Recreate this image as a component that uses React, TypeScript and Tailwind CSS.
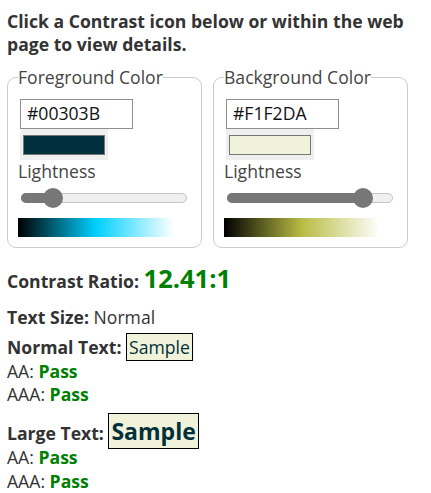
import React from 'react';

interface ColorPanelProps {
  legend: string;
  hex: string;
  thumbLeft: number;
  gradient: string;
}

const ColorPanel: React.FC<ColorPanelProps> = ({ legend, hex, thumbLeft, gradient }) => (
  <fieldset className="w-[195px] rounded-[9px] border border-[#cccccc] px-[10px] pt-[10px] pb-[10px]">
    <legend className="text-[17.6px] leading-[23.4px] text-[#444]">{legend}</legend>
    <div className="ml-[2px] flex h-[29.5px] w-[113px] items-center border border-[#8f8f8f] bg-white pl-[6px] text-[17.6px] text-[#111]">
      {hex}
    </div>
    <div className="ml-[2px] h-[31px] w-[88px] bg-[#efefef] px-[3px] pt-[6px]">
      <div className="h-[20px] w-[82px] border border-[#777]" style={{ backgroundColor: hex }} />
    </div>
    <div className="text-[17.6px] leading-[23.4px] text-[#444]">Lightness</div>
    <div className="relative ml-[3px] mt-[5px] flex h-[20px] w-[166px] items-center">
      <div className="h-[9.5px] w-full rounded-full border border-[#c4c4c4] bg-[#efefef]" />
      <div
        className="absolute left-0 top-[5.25px] h-[9.5px] rounded-l-full bg-[#777]"
        style={{ width: thumbLeft + 10 }}
      />
      <div
        className="absolute top-0 h-[20px] w-[20px] rounded-full bg-[#777]"
        style={{ left: thumbLeft }}
      />
    </div>
    <div className="mt-[10px] h-[19px] w-[156px]" style={{ background: gradient }} />
  </fieldset>
);

const Pass: React.FC<{ label: string }> = ({ label }) => (
  <div>
    {label}: <b className="font-bold text-[#008000]">Pass</b>
  </div>
);

export default function App() {
  return (
    <div
      className="min-h-[493px] bg-white px-[7px] pt-[10px] text-[17.6px] leading-[23.4px] text-[#333]"
      style={{ fontFamily: '"Open Sans", "Noto Sans", sans-serif' }}
    >
      <h2 className="font-bold">Click a Contrast icon below or within the web page to view details.</h2>

      <div className="mt-[9px] flex gap-[11px]">
        <ColorPanel
          legend="Foreground Color"
          hex="#00303B"
          thumbLeft={21.6}
          gradient="linear-gradient(to right, #000000, hsl(191, 100%, 50%), #ffffff)"
        />
        <ColorPanel
          legend="Background Color"
          hex="#F1F2DA"
          thumbLeft={126}
          gradient="linear-gradient(to right, #000000, hsl(62, 48%, 50%), #ffffff)"
        />
      </div>

      <div className="mt-[14px] leading-[1.33]">
        <b className="font-bold">Contrast Ratio:</b>{' '}
        <span className="text-[25.5px] font-bold text-[#008000]">12.41:1</span>
      </div>

      <div className="mt-[10px]">
        <b className="font-bold">Text Size:</b> Normal
      </div>

      <div className="mt-[7px]">
        <div>
          <b className="font-bold">Normal Text:</b>{' '}
          <span className="border border-black bg-[#F1F2DA] px-[2px] py-px text-[#00303B]">Sample</span>
        </div>
        <Pass label="AA" />
        <Pass label="AAA" />
      </div>

      <div className="mt-[9px]">
        <div className="leading-[1.33]">
          <b className="font-bold">Large Text:</b>{' '}
          <span className="border border-black bg-[#F1F2DA] px-[2px] py-px text-[23px] font-bold text-[#00303B]">
            Sample
          </span>
        </div>
        <Pass label="AA" />
        <Pass label="AAA" />
      </div>
    </div>
  );
}
